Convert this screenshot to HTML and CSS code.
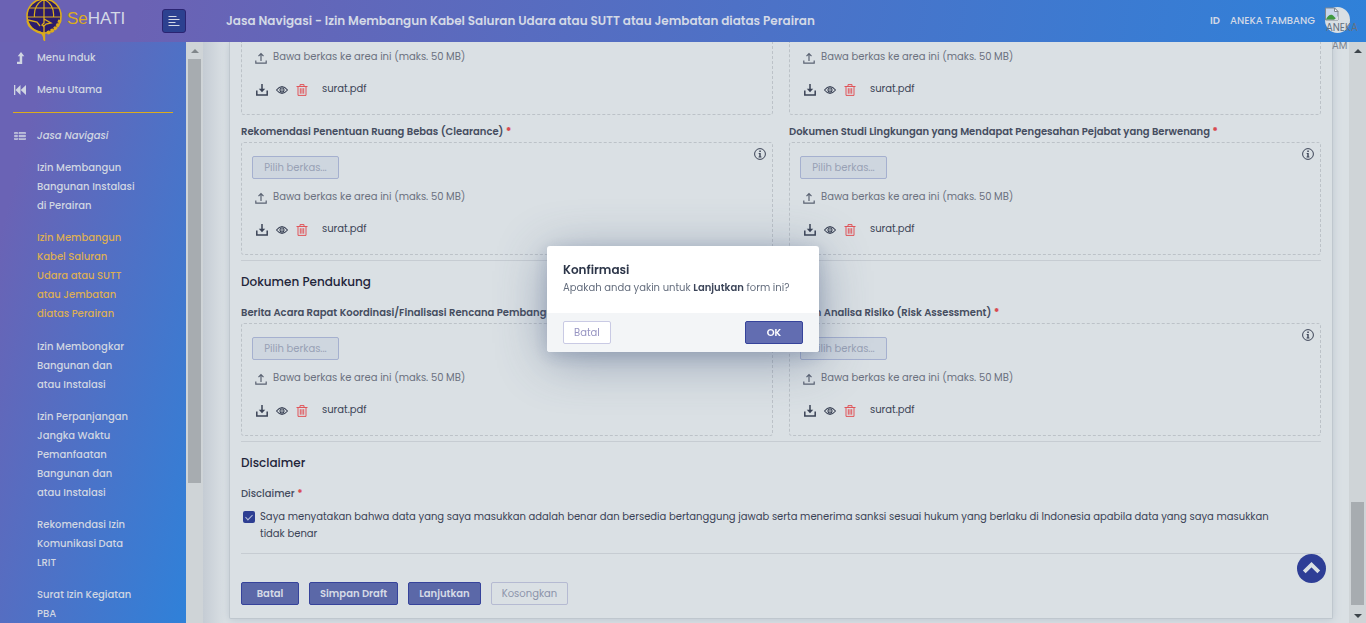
FILE: index.html
```html
<!DOCTYPE html>
<html lang="id">
<head>
<meta charset="utf-8">
<title>SeHATI - Jasa Navigasi</title>
<link rel="stylesheet" href="styles.css">
</head>
<body>
<svg class="defs" aria-hidden="true">
  <symbol id="upload" viewBox="0 0 12 12"><path d="M6 9V2M3.500 4.200 6 1.700l2.500 2.500M.8 8.500v2.700h10.400V8.500" fill="none" stroke="currentColor" stroke-width="1.200"/></symbol>
  <symbol id="download" viewBox="0 0 12 12"><path d="M6 0v6.500M.8 6.500v4.500h10.400V6.500" fill="none" stroke="currentColor" stroke-width="1.500"/><path d="M2.800 4.700h6.400L6 8.200z" fill="currentColor"/></symbol>
  <symbol id="eye" viewBox="0 0 12 12"><path d="M.5 6Q6-.8 11.500 6 6 12.800.5 6z" fill="none" stroke="currentColor" stroke-width="1.100"/><circle cx="6" cy="6" r="2" fill="none" stroke="currentColor" stroke-width="1.100"/><circle cx="6" cy="6" r=".8" fill="currentColor"/></symbol>
  <symbol id="trash" viewBox="0 0 12 12"><path d="M.5 2.500h11M4 2.300V.6h4v1.700M2 2.500v8.900h8V2.500M4.300 4.200v5.500M6 4.200v5.500M7.700 4.200v5.500" fill="none" stroke="currentColor" stroke-width="1"/></symbol>
  <symbol id="info" viewBox="0 0 12 12"><circle cx="6" cy="6" r="5.400" fill="none" stroke="currentColor"/><path d="M5.300 2.500h1.500V4H5.300zM4.700 5h2v3.500h.7v.9H4.600v-.9h.7V5.900h-.6z" fill="currentColor"/></symbol>
</svg>

<header class="topbar">
  <a class="brand" href="#">
    <svg class="brand-logo" viewBox="0 0 38 42" aria-hidden="true">
      <circle cx="19" cy="16" r="17" fill="#2b1c6b" stroke="#dbac1c" stroke-width="1.600"/>
      <path d="M2 17h34M4.500 8h29M19-1v18M19-1C10 4 9 12 9.500 17M19-1c9 5 10 13 9.500 18" fill="none" stroke="#dbac1c" stroke-width="1.200"/>
      <path d="M2 21c2 9 9 9 13 11 3 1.500 4 4 4.500 9V34C12 33 5 30 2 21z" fill="#6a62b3" stroke="#dbac1c" stroke-width="1.400"/>
      <path d="M19 17v6l-2 2 2 1v14M19 19l7 4-5 1-3 3M3 20l9 2 3 4" fill="none" stroke="#dbac1c" stroke-width="1.300"/>
      <path d="M35 20c-2 7-7 11-13 13" fill="none" stroke="#dbac1c" stroke-width="3.500" stroke-dasharray="3 1"/>
    </svg>
    <span class="brand-name"><span class="brand-accent">Se</span>HATI</span>
  </a>
  <button class="menu-toggle" type="button" aria-label="Menu">
    <svg viewBox="0 0 12 12"><path d="M.5 1.500h8M.5 4.500h11M.5 7.500h7M.5 10.500h11" stroke="currentColor" stroke-width="1.100"/></svg>
  </button>
  <h1 class="page-title">Jasa Navigasi - Izin Membangun Kabel Saluran Udara atau SUTT atau Jembatan diatas Perairan</h1>
  <div class="account">
    <strong>ID</strong>
    <span>ANEKA TAMBANG</span>
    <div class="avatar">
      <svg viewBox="0 0 14 14" aria-hidden="true"><path d="M.5 1v12h12.500V4.500L9.500 1z" fill="#c8d6ea" stroke="#808890"/><path d="M1 12.500c2-5 6-6 8-3l3 3z" fill="#3f9a3f"/><path d="M9.500 1v3.500H13z" fill="#fff" stroke="#808890"/><path d="M9 13l4-4v4z" fill="#dbe0e4"/></svg>
      <span class="avatar-alt">ANEKA</span>
    </div>
  </div>
</header>

<div class="shell">
  <nav class="sidebar">
    <a class="nav-link" href="#"><svg viewBox="0 0 12 12"><path d="M7 0l3.300 4.200H8.200V12H3V9.800h2.700V4.200H3.700z" fill="currentColor"/></svg>Menu Induk</a>
    <a class="nav-link" href="#"><svg viewBox="0 0 12 12"><path d="M0 1h1.300v10H0zM6.500 1v10L1.500 6zM12 1v10L6.700 6z" fill="currentColor"/></svg>Menu Utama</a>
    <hr class="nav-rule">
    <a class="nav-link nav-group" href="#"><svg viewBox="0 0 12 12"><path d="M.5 2.500h3v1.200h-3zM.5 5.500h3v1h-3zM.5 8.300h3v1.200h-3zM5 2.500h6.500v1.200H5zM5 5.500h6.500v1H5zM5 8.300h6.500v1.200H5z" fill="none" stroke="currentColor" stroke-width=".8"/></svg>Jasa Navigasi</a>
    <a class="nav-link" href="#">Izin Membangun<br>Bangunan Instalasi<br>di Perairan</a>
    <a class="nav-link active" href="#">Izin Membangun<br>Kabel Saluran<br>Udara atau SUTT<br>atau Jembatan<br>diatas Perairan</a>
    <a class="nav-link" href="#">Izin Membongkar<br>Bangunan dan<br>atau Instalasi</a>
    <a class="nav-link" href="#">Izin Perpanjangan<br>Jangka Waktu<br>Pemanfaatan<br>Bangunan dan<br>atau Instalasi</a>
    <a class="nav-link" href="#">Rekomendasi Izin<br>Komunikasi Data<br>LRIT</a>
    <a class="nav-link" href="#">Surat Izin Kegiatan<br>PBA</a>
  </nav>
  <div class="scrollbar side-scroll"><i class="arrow up"></i><i class="thumb"></i></div>

  <main class="content">
    <form class="card">
      <div class="grid">
        <div class="drop drop-cut">
          <p class="hint"><svg><use href="#upload"/></svg>Bawa berkas ke area ini (maks. 50 MB)</p>
          <div class="file"><svg><use href="#download"/></svg><svg><use href="#eye"/></svg><svg class="red"><use href="#trash"/></svg><span>surat.pdf</span></div>
        </div>
        <div class="drop drop-cut">
          <p class="hint"><svg><use href="#upload"/></svg>Bawa berkas ke area ini (maks. 50 MB)</p>
          <div class="file"><svg><use href="#download"/></svg><svg><use href="#eye"/></svg><svg class="red"><use href="#trash"/></svg><span>surat.pdf</span></div>
        </div>
      </div>
      <div class="grid labelled">
        <div>
          <div class="label">Rekomendasi Penentuan Ruang Bebas (Clearance) <b>*</b></div>
          <div class="drop"><svg class="info"><use href="#info"/></svg>
            <button class="pick" type="button" disabled>Pilih berkas...</button>
            <p class="hint"><svg><use href="#upload"/></svg>Bawa berkas ke area ini (maks. 50 MB)</p>
            <div class="file"><svg><use href="#download"/></svg><svg><use href="#eye"/></svg><svg class="red"><use href="#trash"/></svg><span>surat.pdf</span></div>
          </div>
        </div>
        <div>
          <div class="label">Dokumen Studi Lingkungan yang Mendapat Pengesahan Pejabat yang Berwenang <b>*</b></div>
          <div class="drop"><svg class="info"><use href="#info"/></svg>
            <button class="pick" type="button" disabled>Pilih berkas...</button>
            <p class="hint"><svg><use href="#upload"/></svg>Bawa berkas ke area ini (maks. 50 MB)</p>
            <div class="file"><svg><use href="#download"/></svg><svg><use href="#eye"/></svg><svg class="red"><use href="#trash"/></svg><span>surat.pdf</span></div>
          </div>
        </div>
      </div>
      <hr class="rule">
      <h2 class="section">Dokumen Pendukung</h2>
      <div class="grid">
        <div>
          <div class="label">Berita Acara Rapat Koordinasi/Finalisasi Rencana Pembangunan <b>*</b></div>
          <div class="drop">
            <button class="pick" type="button" disabled>Pilih berkas...</button>
            <p class="hint"><svg><use href="#upload"/></svg>Bawa berkas ke area ini (maks. 50 MB)</p>
            <div class="file"><svg><use href="#download"/></svg><svg><use href="#eye"/></svg><svg class="red"><use href="#trash"/></svg><span>surat.pdf</span></div>
          </div>
        </div>
        <div>
          <div class="label">Kajian Analisa Risiko (Risk Assessment) <b>*</b></div>
          <div class="drop"><svg class="info"><use href="#info"/></svg>
            <button class="pick" type="button" disabled>Pilih berkas...</button>
            <p class="hint"><svg><use href="#upload"/></svg>Bawa berkas ke area ini (maks. 50 MB)</p>
            <div class="file"><svg><use href="#download"/></svg><svg><use href="#eye"/></svg><svg class="red"><use href="#trash"/></svg><span>surat.pdf</span></div>
          </div>
        </div>
      </div>
      <hr class="rule">
      <h2 class="section">Disclaimer</h2>
      <div class="label soft">Disclaimer <b>*</b></div>
      <label class="agree"><input type="checkbox" checked><span>Saya menyatakan bahwa data yang saya masukkan adalah benar dan bersedia bertanggung jawab serta menerima sanksi sesuai hukum yang berlaku di Indonesia apabila data yang saya masukkan<br>tidak benar</span></label>
      <hr class="rule">
      <div class="actions">
        <button class="btn primary" type="button">Batal</button>
        <button class="btn primary" type="button">Simpan Draft</button>
        <button class="btn primary" type="button">Lanjutkan</button>
        <button class="btn outline" type="button">Kosongkan</button>
      </div>
    </form>
    <button class="to-top" type="button" aria-label="Ke atas"><svg viewBox="0 0 30 30"><path d="M7.500 18.500 15 11l7.500 7.500" fill="none" stroke="currentColor" stroke-width="4"/></svg></button>
    <span class="avatar-rest">AM</span>
  </main>
  <div class="scrollbar page-scroll"><i class="arrow up"></i><i class="thumb"></i><i class="arrow down"></i></div>
</div>

<div class="modal" role="dialog" aria-labelledby="modal-title">
  <div class="modal-body">
    <h2 id="modal-title">Konfirmasi</h2>
    <p>Apakah anda yakin untuk <strong>Lanjutkan</strong> form ini?</p>
  </div>
  <div class="modal-foot">
    <button class="btn outline" type="button">Batal</button>
    <button class="btn primary" type="button">OK</button>
  </div>
</div>
</body>
</html>
```
FILE: styles.css
```css
* { box-sizing: border-box; }
body {
  margin: 0;
  height: 100vh;
  overflow: hidden;
  display: flex;
  flex-direction: column;
  background: #dae0e4;
  color: #3b4356;
  font: 10px/17px Poppins, Inter, sans-serif;
}
h1, h2, p { margin: 0; }
a { color: inherit; text-decoration: none; }
button { font: inherit; cursor: pointer; }
.defs { position: absolute; width: 0; height: 0; }

.topbar {
  position: relative;
  z-index: 1;
  flex: none;
  height: 42px;
  display: flex;
  align-items: center;
  padding: 0 16px 0 25px;
  background: linear-gradient(100deg, #6b62b4 10%, #2f81d9);
  color: #d3d9e6;
}
.brand { display: flex; align-items: center; width: 137px; height: 42px; }
.brand-logo { flex: none; width: 38px; height: 42px; }
.brand-name { padding: 0 0 4px 4px; font: 17px/20px "Liberation Sans", sans-serif; }
.brand-accent { color: #dbac1c; }
.menu-toggle {
  width: 24px;
  height: 24px;
  padding: 5px;
  display: flex;
  border: 1px solid #2b2472;
  border-radius: 3px;
  background: #2c4190;
  color: #d3d9e6;
}
.menu-toggle svg { width: 12px; height: 12px; }
.page-title { flex: 1; padding: 0 0 2px 40px; font-size: 12px; font-weight: 600; }
.account { display: flex; align-items: center; gap: 10px; padding-bottom: 2px; font-weight: 500; }
.account strong { font-weight: 600; }
.avatar { position: relative; width: 25px; height: 26px; border-radius: 50%; background: #d9dfe4; }
.avatar svg { width: 14px; height: 14px; display: block; }
.avatar-alt { position: absolute; left: 1px; top: 14px; line-height: 14px; font-weight: 400; color: #65717f; }
.avatar-rest { position: absolute; right: 0; top: 0; width: 17px; line-height: 8px; color: #7b8490; }

.shell { flex: 1; min-height: 0; display: flex; }
.sidebar {
  flex: none;
  width: 186px;
  overflow: hidden;
  display: flex;
  flex-direction: column;
  gap: 13px;
  padding: 6px 13px 0;
  background: linear-gradient(105deg, #6a63b5 15%, #2f81d9);
  color: #d0d6e2;
  font-weight: 500;
  line-height: 19px;
}
.nav-link { position: relative; flex: none; padding-left: 24px; }
.nav-link svg { position: absolute; left: 1px; top: 4px; width: 12px; height: 12px; }
.nav-group { font-style: italic; }
.active { color: #dcae55; padding-bottom: 1px; }
.nav-rule { flex: none; align-self: stretch; height: 1px; margin: 0; border: 0; background: #dbac1c; }

.scrollbar { flex: none; width: 17px; background: #cfd4d7; display: flex; flex-direction: column; align-items: center; }
.arrow { border: 4px solid transparent; border-top-width: 0; border-bottom: 4px solid #80868a; margin: 7px 0 6px; }
.page-scroll .arrow { border-bottom-color: #3d444a; }
.page-scroll .down { border-top: 4px solid #3d444a; border-bottom-width: 0; margin: 9px 0 5px; }
.thumb { width: 13px; background: #a7acb0; }
.side-scroll .thumb { height: 73%; }
.page-scroll .thumb { height: 103px; margin-top: auto; }

.content {
  position: relative;
  flex: 1;
  min-width: 0;
  padding: 0 16px 0 26px;
  background: linear-gradient(90deg, #c5ccd4, #dae0e4 22px);
}
.card {
  padding: 0 11px 13px;
  border: 1px solid #bfc7ce;
  border-top: 0;
  border-radius: 0 0 2px 2px;
  background: #dae0e4;
  box-shadow: 0 1px 8px #bec7d1;
}
.grid { display: grid; grid-template-columns: 1fr 1fr; gap: 16px; }
.labelled { padding-top: 7px; }
.label { padding-top: 1px; margin-bottom: 1px; line-height: 18px; font-weight: 600; color: #454d5f; white-space: nowrap; }
.label b { color: #d84a50; }
.soft { font-weight: 500; }
.drop {
  position: relative;
  padding: 13px 10px 17px;
  border: 1px dashed #bcc2c8;
  border-radius: 3px;
}
.drop-cut { padding-top: 6px; border-top: 0; border-radius: 0 0 3px 3px; }
.info { position: absolute; right: 6px; top: 5px; width: 12px; height: 12px; }
.pick {
  display: block;
  width: 87px;
  height: 23px;
  margin-bottom: 9px;
  padding: 0;
  border: 1px solid #a5b0cf;
  border-radius: 2px;
  background: #ced6df;
  color: #98a1b5;
}
.hint { display: flex; align-items: center; gap: 6px; padding-left: 3px; color: #6b717f; }
.hint svg, .file svg { width: 12px; height: 12px; margin-top: 3px; }
.hint svg { color: #5a6272; }
.file { display: flex; align-items: center; gap: 8px; margin-top: 15px; padding-left: 4px; }
.file span { padding-left: 6px; }
.file .red { color: #e0555a; }
.rule { height: 1px; margin: 5px 0 11px; border: 0; background: #c6ccd2; }
.section { margin-bottom: 11px; font-size: 12px; line-height: 20px; font-weight: 500; color: #1f253a; }
.agree { display: flex; gap: 5px; margin: 5px 0 11px; padding-left: 2px; }
.agree input {
  appearance: none;
  flex: none;
  width: 12px;
  height: 12px;
  margin: 3px 0 0;
  border-radius: 2px;
  background: #2d3e92;
}
.agree input::after {
  content: "";
  display: block;
  width: 3px;
  height: 6px;
  margin: 2px 0 0 4px;
  border: solid #b5bdd8;
  border-width: 0 1px 1px 0;
  transform: rotate(45deg);
}
.actions { display: flex; gap: 10px; padding-top: 17px; }
.btn { height: 23px; padding: 0 10px; border: 1px solid; border-radius: 2px; }
.primary { min-width: 58px; border-color: #36439b; background: #5b68a8; color: #d5dae6; font-weight: 600; }
.outline { border-color: #b5bad2; background: transparent; color: #8c93aa; }
.to-top {
  position: absolute;
  right: 23px;
  bottom: 40px;
  width: 29px;
  height: 29px;
  padding: 0;
  border: 0;
  border-radius: 50%;
  background: #2e3e96;
  color: #dae0e4;
}
.to-top svg { display: block; width: 29px; height: 29px; }

.modal {
  position: fixed;
  left: 50%;
  top: 246px;
  z-index: 2;
  width: 272px;
  margin-left: -136px;
  overflow: hidden;
  border-radius: 3px;
  background: #fff;
  box-shadow: 0 8px 50px rgba(60, 80, 120, .45), 0 4px 16px rgba(60, 80, 120, .2);
}
.modal-body { padding: 14px 16px 17px; color: #646d7d; }
.modal-body h2 { font-size: 12px; line-height: 19px; font-weight: 600; color: #2c3548; }
.modal-body p { white-space: nowrap; }
.modal-body strong { font-weight: 600; color: #3b4458; }
.modal-foot { display: flex; justify-content: space-between; padding: 8px 16px; background: #f3f5f7; }
.modal-foot .outline { background: #fff; border-color: #c9cae4; color: #9794c2; }
.modal-foot .primary { background: #626db1; color: #fff; }
```
